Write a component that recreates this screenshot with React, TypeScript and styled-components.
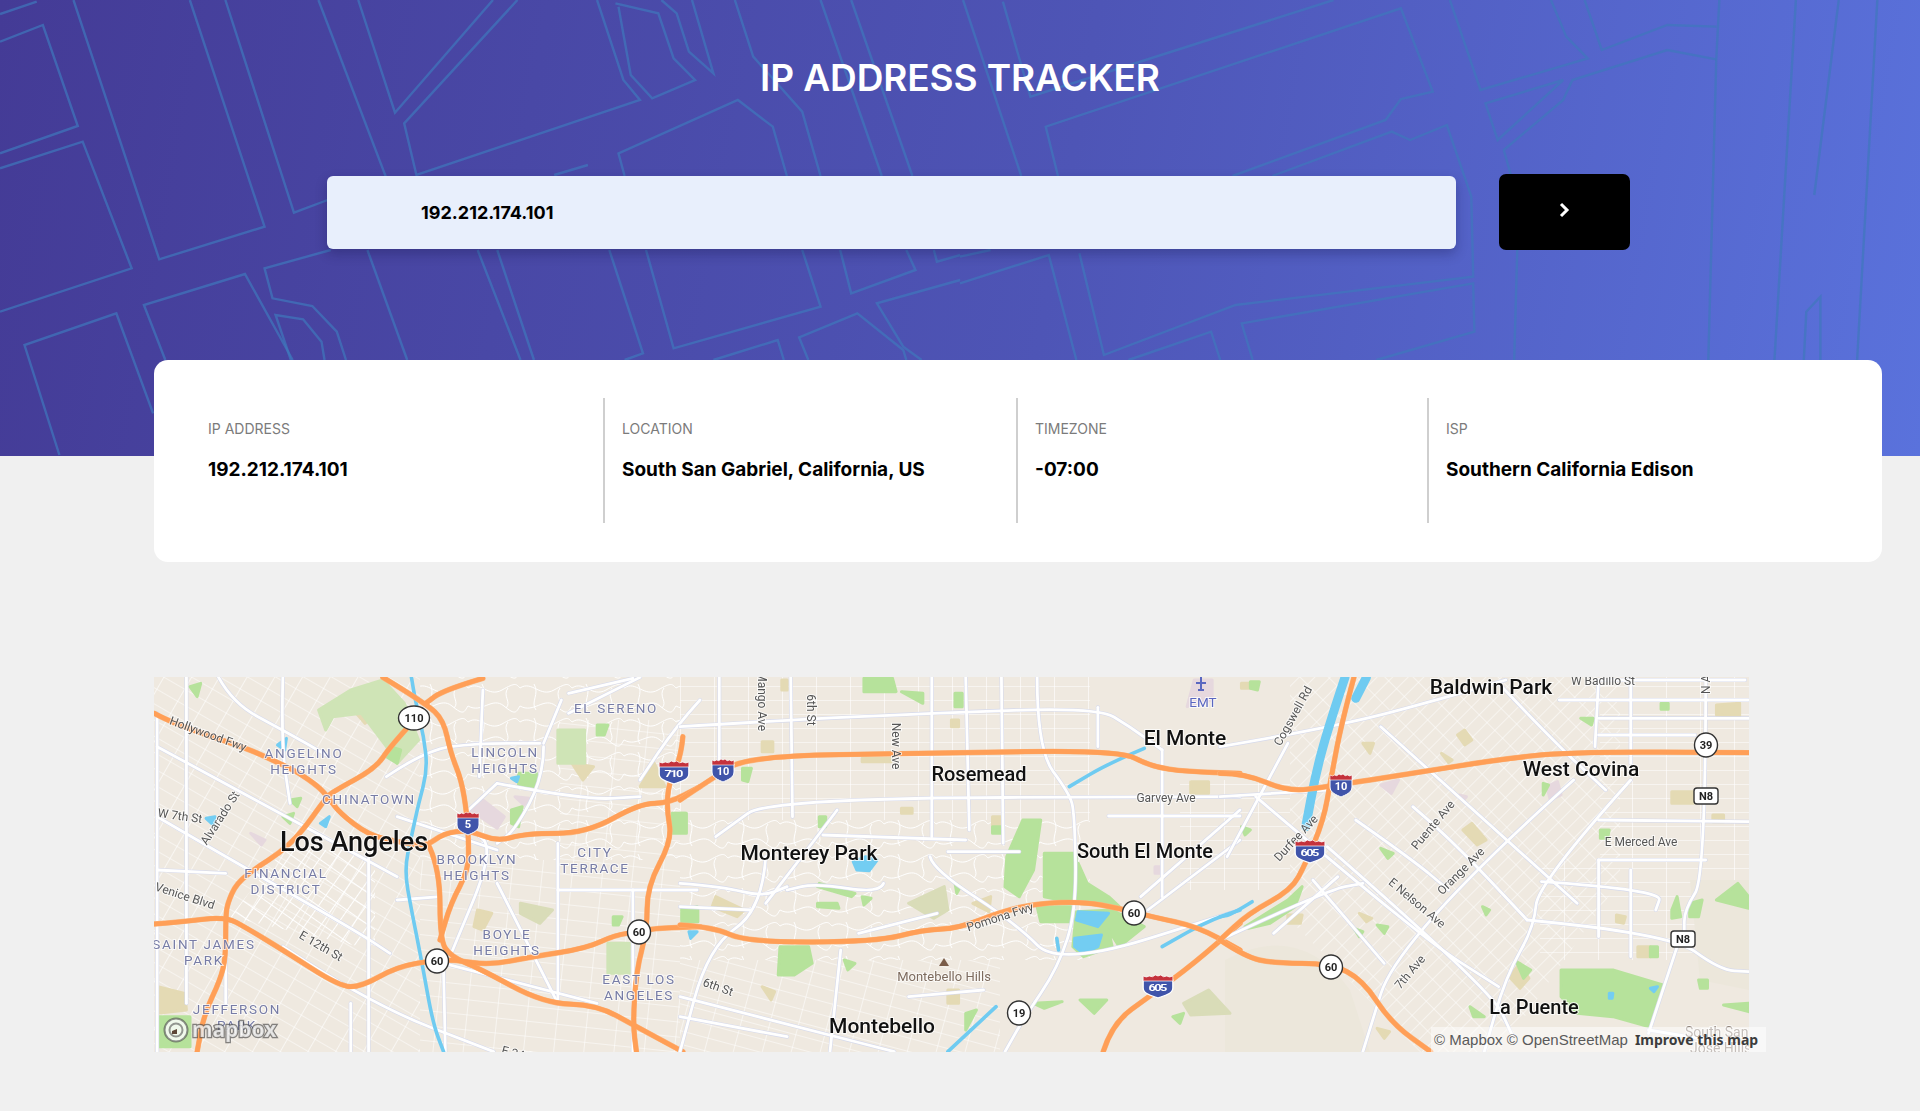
import React from "react";
import styled, { createGlobalStyle } from "styled-components";

const GlobalStyle = createGlobalStyle`
  html, body {
    margin: 0;
    background: #f0f0f0;
    font-family: "Inter", "Liberation Sans", sans-serif;
  }
`;

const Page = styled.main`
  width: 1920px;
  height: 1111px;
  overflow: hidden;
`;

const Hero = styled.header`
  position: relative;
  box-sizing: border-box;
  height: 456px;
  padding-top: 54px;
  background: linear-gradient(100deg, #443b96 0%, #4e55b6 55%, #5a72dc 100%);
  overflow: hidden;
`;

const HeroLines = styled.svg`
  position: absolute;
  inset: 0;
  width: 1920px;
  height: 456px;
  path {
    fill: none;
    stroke: #3f78bc;
    stroke-opacity: 0.7;
    stroke-width: 2.4px;
    vector-effect: non-scaling-stroke;
  }
`;

const Title = styled.h1`
  position: relative;
  margin: 0;
  height: 48px;
  line-height: 48px;
  text-align: center;
  color: #fff;
  font-size: 37px;
  font-weight: 600;
  letter-spacing: -0.1px;
`;

const SearchForm = styled.form`
  position: relative;
  display: flex;
  align-items: center;
  gap: 43px;
  margin: 72px 0 0 327px;
  width: 1303px;
`;

const SearchInput = styled.input`
  box-sizing: border-box;
  flex: 1;
  height: 73px;
  padding: 0 0 0 94px;
  border: 0;
  border-radius: 6px;
  outline: none;
  background: #e8effc;
  box-shadow: 0 5px 12px rgba(20, 20, 70, 0.3);
  color: #000;
  font-family: "Inter", sans-serif;
  font-size: 18px;
  font-weight: 700;
`;

const SearchButton = styled.button`
  display: flex;
  align-items: center;
  justify-content: center;
  width: 131px;
  height: 76px;
  padding: 0 0 5px;
  border: 0;
  border-radius: 7px;
  background: #000;
`;

const InfoCard = styled.section`
  position: relative;
  box-sizing: border-box;
  display: grid;
  grid-template-columns: 414px 413px 411px 1fr;
  width: 1728px;
  height: 202px;
  margin: -96px 0 0 154px;
  padding: 38px 37px 39px;
  border-radius: 14px;
  background: #fff;
`;

const InfoCell = styled.div<{ $divider?: boolean }>`
  padding: 22px 0 0 17px;
  border-right: ${(p) => (p.$divider ? "2px solid #cfcfcf" : "0")};
`;

const InfoLabel = styled.div`
  height: 18px;
  line-height: 18px;
  color: #7b7b7b;
  font-size: 14px;
  font-weight: 400;
`;

const InfoValue = styled.div`
  margin-top: 21px;
  line-height: 22px;
  color: #000;
  font-size: 19px;
  font-weight: 700;
`;

const MapFrame = styled.section`
  position: relative;
  width: 1612px;
  height: 375px;
  margin: 115px 0 0 154px;
`;

const MapCanvas = styled.svg`
  display: block;
  width: 1595px;
  height: 375px;
  background: #efe9e0;
  filter: blur(0.35px);
`;

const Attribution = styled.div`
  position: absolute;
  right: 0;
  bottom: 0;
  display: flex;
  align-items: center;
  gap: 7px;
  box-sizing: border-box;
  height: 25px;
  width: 335px;
  padding-left: 3px;
  background: rgba(255, 255, 255, 0.5);
  color: #5a5a5a;
  font-family: "Liberation Sans", sans-serif;
  font-size: 15px;
  white-space: nowrap;
  b {
    color: #3c3c3c;
    font-family: "Noto Sans", sans-serif;
    font-size: 14px;
    font-weight: 700;
  }
`;

const Road = styled.path<{ $kind: "casing" | "street" | "freeway" | "freewayEdge" | "river" | "canal" }>`
  fill: none;
  stroke-linecap: round;
  stroke-linejoin: round;
  vector-effect: non-scaling-stroke;
  stroke: ${(p) =>
    ({ casing: "#d6daec", street: "#ffffff", freeway: "#ff9f57", freewayEdge: "#fbb57e", river: "#6fcbf1", canal: "#6fcbf1" })[p.$kind]};
  stroke-width: ${(p) =>
    ({ casing: 4, street: 2.8, freeway: 4.6, freewayEdge: 5.4, river: 3.6, canal: 9 })[p.$kind]}px;
`;

const Grid = styled.path<{ $fill: string }>`
  fill: ${(p) => p.$fill};
`;

const Patch = styled.path<{ $fill: string }>`
  fill: ${(p) => p.$fill};
  stroke: ${(p) => p.$fill};
  stroke-width: 3px;
  stroke-linejoin: round;
  vector-effect: non-scaling-stroke;
`;

const Place = styled.text<{ $size?: number }>`
  font-family: "Roboto", sans-serif;
  font-size: ${(p) => p.$size ?? 20}px;
  font-weight: 500;
  fill: #111;
  text-anchor: middle;
  paint-order: stroke;
  stroke: rgba(255, 255, 255, 0.75);
  stroke-width: 2px;
`;

const District = styled.text`
  font-family: "Roboto", sans-serif;
  font-size: 13.5px;
  letter-spacing: 1.7px;
  fill: #777ca6;
  text-anchor: middle;
  paint-order: stroke;
  stroke: rgba(255, 255, 255, 0.7);
  stroke-width: 2px;
`;

const StreetName = styled.text<{ $color?: string; $anchor?: string; $size?: number }>`
  font-family: "Roboto", sans-serif;
  font-size: ${(p) => p.$size ?? 12}px;
  fill: ${(p) => p.$color ?? "#555"};
  text-anchor: ${(p) => p.$anchor ?? "middle"};
  paint-order: stroke;
  stroke: rgba(255, 255, 255, 0.7);
  stroke-width: 2px;
`;

const ShieldText = styled.text<{ $size?: number; $color?: string }>`
  font-family: "Roboto", sans-serif;
  font-size: ${(p) => p.$size ?? 11}px;
  font-weight: 700;
  fill: ${(p) => p.$color ?? "#222"};
  text-anchor: middle;
`;

const MapboxWord = styled.text`
  font-family: "Noto Sans", sans-serif;
  font-size: 21px;
  font-weight: 700;
  fill: rgba(255, 255, 255, 0.75);
  paint-order: stroke;
  stroke: rgba(70, 70, 70, 0.65);
  stroke-width: 2.5px;
`;

// hero line work, traced from the left and right half of the banner
const heroLeft = [
  "M0,42 L60,5",
  "M0,125 L70,75 L127,378 L0,460",
  "M0,505 L135,425 L215,805 L0,935",
  "M120,0 L260,778 L432,680 L310,0",
  "M368,0 L480,638 L535,600",
  "M520,0 L630,530",
  "M585,0 L645,338 L805,0",
  "M845,0 L660,370 L680,525 L1045,300 L1018,240 L975,0",
  "M1005,10 L1075,40 L1100,175 L1135,240 L1065,295 L1030,225 L1010,20",
  "M1080,0 L1105,40 L1125,155 L1165,220 L1130,0",
  "M1020,528 L1010,460 L1205,300 L1262,380 L1285,528",
  "M1200,0 L1230,170 L1310,335 L1340,528",
  "M1340,0 L1440,528",
  "M1390,0 L1490,528",
  "M960,495 L905,525",
  "M540,750 L432,805 L445,895 L510,918 L550,995 L565,1080",
  "M600,750 L665,1080",
  "M780,750 L850,1080",
  "M812,750 L872,1080",
  "M995,750 L1050,1060 L1020,1080",
  "M1055,750 L1100,1045 L1340,920 L1310,750",
  "M1372,750 L1390,880 L1495,810 L1480,750",
  "M270,1080 L235,915 L400,822 L478,1080",
  "M97,1365 L40,1035 L190,940 L250,1240",
  "M475,1080 L450,945 L495,958 L525,1025 L530,1080",
  "M1568,840 L1432,910 L1475,1040 L1505,1080",
  "M1320,1080 L1305,1012 L1400,940 L1475,1050 L1480,1080",
  "M1165,1080 L1270,1020 L1280,1080",
  "M1525,750 L1530,785 L1568,765",
];

const heroRight = [
  "M70,5 L115,290 L610,0",
  "M160,528 L140,380 L720,25 L772,275 L720,297 L695,360 L445,528",
  "M5,0 L100,528",
  "M800,0 L850,270 L1025,175 L990,110 L965,0",
  "M1020,0 L1048,150 L1155,75 L1235,80",
  "M858,310 L985,240 L878,420 Z",
  "M900,528 L888,450 L985,300 L1000,240 L1155,150 L1235,178",
  "M510,528 L705,395 L735,420 L795,375 L835,590 L838,830 L450,915 L235,1065 L195,760",
  "M190,1080 L145,765 L0,850",
  "M478,1080 L460,970 L838,850 L840,995 L680,1080",
  "M275,1080 L410,995 L425,1080",
  "M910,750 L905,1080",
  "M1240,0 L1235,178 L1222,1080",
  "M1365,0 L1330,1080",
  "M1435,0 L1395,585",
  "M1498,0 L1465,1080",
  "M1378,1080 L1382,935 L1405,890 L1405,1080",
  "M0,770 L50,750",
];

// map data in panel coordinates; every panel is a 560x390 crop drawn at 2.8x / 3x
const panels = [
  {
    x: 140,
    hills: [
      "M590,60 L680,30 L740,100 L780,210 L720,280 L690,230 L620,130 L540,140 L520,180 L500,120 Z",
      "M1170,180 L1245,180 L1245,280 L1170,280 Z",
      "M1310,820 L1370,820 L1370,910 L1310,910 Z",
    ],
    parks: [
      "M50,1040 L140,1040 L140,1130 L50,1130 Z",
      "M1060,310 L1110,310 L1110,350 L1060,345 Z",
      "M1490,430 L1530,430 L1530,490 L1490,490 Z",
      "M1518,720 L1560,710 L1560,750 L1518,750 Z",
      "M140,50 L170,40 L160,80 Z",
      "M1280,165 L1310,165 L1300,195 L1280,195 Z",
      "M700,230 L730,240 L720,280 L690,260 Z",
      "M1040,420 L1070,410 L1060,470 L1040,460 Z",
      "M420,390 L450,385 L440,410 Z",
      "M400,440 L430,430 L420,460 Z",
      "M1325,740 L1350,740 L1340,765 L1325,765 Z",
    ],
    sand: [
      "M590,110 L640,70 L670,120 L630,160 Z",
      "M1210,280 L1270,290 L1240,330 Z",
      "M945,720 L985,730 L960,780 L935,770 Z",
      "M50,950 L125,970 L130,1020 L50,1030 Z",
      "M1400,350 L1440,280 L1470,350 Z",
    ],
    fields: ["M1065,700 L1155,720 L1120,760 L1065,730 Z"],
    pink: ["M925,420 L960,390 L1020,440 L1000,475 Z", "M310,490 L350,510 L340,525 Z", "M1050,380 L1090,385 L1075,405 Z"],
    water: [
      "M385,225 L410,205 L405,240 Z",
      "M185,445 L210,440 L205,465 Z",
      "M505,460 L530,440 L520,470 Z",
      "M1040,325 L1060,320 L1055,335 Z",
    ],
    rivers: ["M760,22 L770,90 L795,200 L805,300 L780,400 L760,500 L740,600 L760,720 L790,880 L820,1060 L850,1145"],
    canals: [] as string[],
    streets: [
      "M48,230 L530,510 L720,620",
      "M48,440 L240,560 L600,780 L700,850",
      "M400,22 L395,220 L420,400",
      "M640,560 L640,1145",
      "M48,600 L240,610",
      "M720,690 L840,680",
      "M590,1000 L590,1145",
      "M850,900 L855,1145",
      "M1000,340 L1240,390 L1400,380",
      "M1130,230 L1130,320 L1050,480 L1000,520",
      "M1180,90 L1130,220",
      "M1200,70 L1380,25",
      "M920,420 L1000,340",
      "M960,60 L950,320",
      "M690,320 L800,240 L940,220 L1120,220",
      "M950,500 L1000,520 L860,880",
      "M1170,660 L1560,660",
      "M1380,660 L1380,1145",
      "M1000,640 L1170,1000",
      "M850,880 L1280,1000",
      "M400,830 L640,1000 L990,1145",
      "M220,22 L260,100 L400,180 L530,260",
      "M48,130 L48,1145",
      "M130,22 L130,1000",
      "M240,760 L240,1000",
      "M720,440 L1000,540",
      "M1170,520 L1170,1000",
      "M1400,22 L1200,130",
      "M1568,90 L1500,170 L1400,330",
    ],
    freeways: [
      "M40,130 L90,160 L300,235 L380,275 L440,305 L500,350 L525,380 L560,430 L640,495 L720,515 L800,530 L850,490 L920,480 L1000,515 L1080,490 L1250,490 L1400,400 L1480,400 L1568,350",
      "M960,25 L850,60 L800,100",
      "M680,22 L800,100 L850,150 L870,250 L900,330 L915,430 L920,510 L920,600 L870,700 L840,810",
      "M760,160 L700,230 L660,295 L540,365 L520,385 L450,490 L390,550 L330,590 L270,640 L245,700 L240,740 L240,860 L225,930 L180,1030 L160,1145",
      "M40,762 L120,755 L240,740 L300,775 L400,840 L560,950 L620,950 L720,890 L830,870 L880,870 L980,885 L1100,860 L1250,835 L1330,795 L1400,785 L1440,775 L1568,770",
      "M810,530 L840,600 L840,810 L870,860 L950,895 L1130,1000 L1280,1005 L1390,1070 L1520,1145",
      "M1520,200 L1515,260 L1480,340 L1475,420 L1490,510 L1420,650 L1420,780 L1390,900 L1380,1060 L1390,1145",
    ],
  },
  {
    x: 680,
    hills: [] as string[],
    parks: [
      "M960,450 L1010,450 L990,600 L950,680 L910,650 L915,560 Z",
      "M1020,550 L1110,550 L1110,700 L1020,680 Z",
      "M1115,580 L1140,640 L1200,680 L1230,710 L1110,700 Z",
      "M280,830 L360,830 L370,880 L320,915 L275,915 Z",
      "M1000,710 L1095,710 L1095,755 L1010,755 Z",
      "M1110,725 L1210,720 L1300,770 L1230,830 L1200,780 L1210,830 L1130,860 L1100,830 Z",
      "M515,25 L595,25 L605,65 L515,65 Z",
      "M620,65 L680,70 L680,100 Z",
      "M0,430 L15,430 L15,480 L0,480 Z",
      "M5,715 L50,715 L50,755 L5,755 Z",
      "M390,640 L490,670 L480,680 L385,650 Z",
      "M510,680 L535,685 L515,705 Z",
      "M385,700 L440,700 L445,715 L385,710 Z",
      "M175,295 L200,295 L190,335 L175,330 Z",
      "M990,1000 L1070,995 L1020,1015 Z",
      "M1120,990 L1195,990 L1160,1030 Z",
      "M800,1030 L830,1020 L800,1080 Z",
      "M390,440 L408,440 L408,470 L390,470 Z",
      "M875,470 L900,470 L900,490 L875,490 Z",
      "M770,640 L785,650 L775,670 Z",
      "M770,70 L790,70 L790,110 L770,110 Z",
      "M460,870 L490,880 L470,900 Z",
      "M1380,1040 L1410,1030 L1400,1060 Z",
    ],
    sand: [
      "M620,415 L650,415 L650,430 L620,430 Z",
      "M875,440 L900,440 L900,470 L875,470 Z",
      "M1430,335 L1480,335 L1480,370 L1430,370 Z",
      "M100,680 L180,720 L160,740 L90,710 Z",
      "M820,700 L870,680 L865,725 Z",
      "M750,960 L780,960 L780,1000 L750,1000 Z",
      "M230,950 L265,965 L255,990 Z",
      "M510,265 L590,265 L590,275 L510,275 Z",
      "M230,215 L260,215 L260,245 L230,245 Z",
      "M760,150 L780,150 L780,170 L760,170 Z",
      "M285,30 L300,30 L300,60 L285,60 Z",
    ],
    fields: ["M640,700 L740,650 L750,720 L710,745 Z", "M1410,1000 L1480,960 L1540,1030 L1430,1035 Z"],
    pink: ["M1330,590 L1345,590 L1345,610 L1330,610 Z", "M1440,30 L1490,30 L1490,90 L1420,110 Z"],
    water: [
      "M485,575 L520,560 L552,570 L530,602 L495,600 Z",
      "M1115,725 L1200,730 L1170,770 L1110,750 Z",
      "M1105,805 L1180,795 L1170,830 L1130,850 L1105,830 Z",
      "M25,785 L48,785 L30,805 Z",
    ],
    rivers: ["M1300,235 L1200,280 L1090,350", "M1568,720 L1490,745 L1350,830", "M885,1010 L750,1145", "M1055,805 L1060,840"],
    canals: [] as string[],
    streets: [
      "M0,170 L300,150 L700,130 L1170,112 L1260,170 L1350,240",
      "M310,22 L315,440",
      "M705,22 L705,500",
      "M1000,22 L1000,240 L1090,370 L1105,430 L1110,720 L1060,890 L960,1050 L910,1145",
      "M190,430 L250,385 L1568,380",
      "M400,495 L800,510",
      "M190,430 L100,500",
      "M750,545 L950,545",
      "M0,640 L120,650 L230,680 L300,650",
      "M0,710 L200,720",
      "M700,560 L710,600 L940,760 L1060,890 L1568,720",
      "M240,560 L230,720 L80,830 L0,1145",
      "M0,980 L400,1090 L600,1145",
      "M0,1040 L300,1100",
      "M450,840 L420,1145",
      "M1200,438 L1568,438",
      "M1350,240 L1350,680",
      "M1568,420 L1290,680",
      "M1568,510 L1310,720",
      "M110,22 L110,280",
      "M800,22 L810,480",
      "M900,22 L905,520",
      "M1170,112 L1170,230",
      "M440,420 L370,520 L240,700",
      "M640,980 L850,960",
      "M720,730 L500,790",
      "M570,640 L560,670 L380,640 L300,660",
    ],
    freeways: [
      "M0,390 L90,325 L190,258 L700,250 L1230,240 L1320,290 L1420,305 L1568,310",
      "M0,765 L90,770 L190,817 L550,815 L680,780 L780,775 L900,725 L1000,700 L1130,695 L1230,715 L1320,740 L1450,770 L1568,840",
      "M1185,1145 L1210,1060 L1320,975 L1440,880 L1568,760",
    ],
  },
  {
    x: 1220,
    hills: [] as string[],
    parks: [
      "M955,900 L1100,900 L1240,945 L1200,1070 L1100,1040 L1000,1030 L955,980 Z",
      "M70,770 L190,690 L230,650 L210,710 L140,760 L80,775 Z",
      "M1390,690 L1450,640 L1480,680 L1480,715 Z",
      "M1265,720 L1280,680 L1290,740 L1265,745 Z",
      "M1315,700 L1350,690 L1340,740 L1315,740 Z",
      "M1410,1005 L1480,1000 L1480,1025 Z",
      "M450,535 L485,550 L470,565 Z",
      "M440,765 L470,770 L460,790 Z",
      "M735,710 L755,720 L745,735 Z",
      "M60,470 L85,480 L70,495 Z",
      "M1065,480 L1090,480 L1085,505 L1065,505 Z",
      "M1010,145 L1045,145 L1040,165 Z",
      "M1235,100 L1255,100 L1255,118 L1235,118 Z",
      "M830,875 L870,900 L850,925 Z",
      "M1340,930 L1365,930 L1365,955 L1345,955 Z",
      "M1205,830 L1225,830 L1225,860 L1205,860 Z",
      "M905,340 L920,345 L905,375 Z",
      "M700,1010 L740,1040 L710,1040 Z",
      "M375,775 L400,785 L390,800 Z",
      "M85,35 L110,35 L105,60 L85,55 Z",
    ],
    sand: [
      "M665,195 L685,180 L705,210 L685,225 Z",
      "M680,480 L705,460 L745,510 L720,525 Z",
      "M1265,365 L1325,365 L1325,400 L1265,400 Z",
      "M1380,435 L1410,435 L1410,455 L1380,455 Z",
      "M1390,105 L1455,100 L1455,140 L1390,135 Z",
      "M1170,830 L1205,830 L1205,860 L1170,860 Z",
      "M810,920 L840,880 L865,925 L840,955 Z",
      "M400,220 L430,220 L420,250 Z",
      "M190,735 L230,735 L225,760 L190,760 Z",
      "M390,730 L425,745 L410,755 Z",
      "M1110,735 L1135,740 L1130,760 L1110,755 Z",
      "M440,1075 L475,1085 L460,1105 Z",
      "M60,40 L85,40 L85,55 L60,55 Z",
      "M620,250 L650,270 L640,278 Z",
    ],
    fields: [] as string[],
    pink: ["M450,345 L500,330 L480,370 Z", "M915,350 L945,335 L955,375 L925,390 Z", "M670,375 L690,380 L680,392 Z"],
    water: ["M1090,970 L1100,970 L1098,985 L1090,985 Z", "M1205,955 L1225,950 L1215,965 Z"],
    rivers: ["M90,695 L30,735 L0,740"],
    canals: ["M350,22 L310,150 L270,300 L240,470", "M410,22 L380,85"],
    streets: [
      "M0,230 L330,170 L640,80 L800,30",
      "M0,380 L300,360",
      "M100,380 L560,800 L780,950",
      "M300,530 L760,960 L820,1100",
      "M1150,330 L890,640 L880,770 L800,920 L740,1145",
      "M990,330 L500,800 L400,1145",
      "M1470,30 L1060,30",
      "M1060,30 L1050,230",
      "M1360,22 L1360,620 L1300,720 L1300,790",
      "M860,750 L1260,790 L1400,900 L1480,905",
      "M1280,830 L1200,1090",
      "M900,635 L1240,660 L1220,720",
      "M1060,450 L1480,455",
      "M540,410 L640,500 L860,750",
      "M450,170 L1000,700",
      "M780,40 L930,210 L1080,360",
      "M950,90 L1480,90",
      "M1060,145 L1480,145",
      "M1060,195 L1330,195",
      "M1150,30 L1150,280",
      "M1060,570 L1360,570",
      "M380,450 L540,570 L640,660",
      "M1060,570 L1060,800",
      "M1150,600 L1150,860",
      "M1200,1080 L1480,1130",
      "M0,810 L300,660 L400,640",
      "M330,620 L150,790",
      "M260,630 L460,880",
      "M190,220 L20,560",
    ],
    freeways: [
      "M375,22 L340,160 L310,330 L290,450 L240,580 L200,660 L80,730 L0,810",
      "M0,310 L70,310 L190,365 L300,350 L540,310 L770,270 L980,245 L1481,248",
      "M0,810 L70,860 L150,880 L310,880 L400,930 L480,1060 L590,1145",
    ],
  },
];

const panelTransform = (x: number) => `translate(${x} 670) scale(${1 / 2.8} ${1 / 3})`;

// round the corners of a traced polyline
const smooth = (d: string) => {
  const pts = d
    .replace(/[ML]/g, "")
    .trim()
    .split(/\s+/)
    .map((p) => p.split(",").map(Number));
  if (pts.length < 3) return d;
  let out = `M${pts[0][0]},${pts[0][1]}`;
  for (let i = 1; i < pts.length - 1; i++) {
    const [x, y] = pts[i];
    const [nx, ny] = pts[i + 1];
    out += ` Q${x},${y} ${(x + nx) / 2},${(y + ny) / 2}`;
  }
  const last = pts[pts.length - 1];
  return `${out} L${last[0]},${last[1]}`;
};

const InterstateShield = ({ x, y, label, wide }: { x: number; y: number; label: string; wide?: boolean }) => (
  <g transform={`translate(${x} ${y}) scale(${wide ? 1.35 : 1} 1)`}>
    <path d="M-11,-6 H11 V2 C11,8 4,10 0,12 C-4,10 -11,8 -11,2 Z" fill="#4054aa" stroke="#fff" strokeWidth="1" />
    <path
      d="M-11,-5 V-10 Q-8.5,-8 -6.5,-10 Q-4,-8 -2,-11 Q0,-9 2,-11 Q4,-8 6.5,-10 Q8.5,-8 11,-10 V-5 Z"
      fill="#c4323c"
      stroke="#fff"
      strokeWidth="0.6"
    />
    <ShieldText $color="#fff" $size={label.length > 2 ? 9.5 : 11} y="5" textLength={label.length > 2 ? 14 : undefined}>
      {label}
    </ShieldText>
  </g>
);

const RoundShield = ({ x, y, label, rx = 11.5 }: { x: number; y: number; label: string; rx?: number }) => (
  <g transform={`translate(${x} ${y})`}>
    <ellipse rx={rx} ry="12" fill="#fff" stroke="#333" strokeWidth="1.4" />
    <ShieldText y="4">{label}</ShieldText>
  </g>
);

const SquareShield = ({ x, y, label }: { x: number; y: number; label: string }) => (
  <g transform={`translate(${x} ${y})`}>
    <rect x="-12" y="-8" width="24" height="16" rx="3" fill="#fff" stroke="#333" strokeWidth="1.4" />
    <ShieldText y="4">{label}</ShieldText>
  </g>
);

const streetNames: [string, number, number, number][] = [
  ["Hollywood Fwy", 208, 738, 20],
  ["W 7th St", 180, 820, 8],
  ["Alvarado St", 220, 822, -57],
  ["Venice Blvd", 185, 900, 18],
  ["E 12th St", 321, 950, 30],
  ["E 24th St", 525, 1060, 15],
  ["New Ave", 896, 750, 90],
  ["6th St", 811, 714, 90],
  ["Garvey Ave", 1166, 802, 0],
  ["Pomona Fwy", 1000, 921, -18],
  ["6th St", 718, 991, 20],
  ["Cogswell Rd", 1293, 720, -61],
  ["W Badillo St", 1603, 685, 0],
  ["E Merced Ave", 1641, 846, 0],
  ["Puente Ave", 1433, 829, -50],
  ["Orange Ave", 1461, 875, -45],
  ["Durfee Ave", 1296, 842, -47],
  ["E Nelson Ave", 1417, 907, 40],
  ["7th Ave", 1410, 976, -50],
];

const districts: [string, number, number][] = [
  ["ANGELINO", 304, 758],
  ["HEIGHTS", 304, 774],
  ["LINCOLN", 505, 757],
  ["HEIGHTS", 505, 773],
  ["EL SERENO", 616, 713],
  ["CHINATOWN", 369, 804],
  ["FINANCIAL", 286, 878],
  ["DISTRICT", 286, 894],
  ["BROOKLYN", 477, 864],
  ["HEIGHTS", 477, 880],
  ["CITY", 595, 857],
  ["TERRACE", 595, 873],
  ["BOYLE", 507, 939],
  ["HEIGHTS", 507, 955],
  ["SAINT JAMES", 204, 949],
  ["PARK", 204, 965],
  ["EAST LOS", 639, 984],
  ["ANGELES", 639, 1000],
  ["JEFFERSON", 237, 1014],
  ["PARK", 237, 1030],
];

const places: [string, number, number, number][] = [
  ["Los Angeles", 354, 851, 27],
  ["Monterey Park", 809, 860, 21],
  ["Rosemead", 979, 781, 20],
  ["El Monte", 1185, 745, 21],
  ["South El Monte", 1145, 858, 20],
  ["Montebello", 882, 1033, 21],
  ["Baldwin Park", 1491, 694, 21],
  ["West Covina", 1581, 776, 21],
  ["La Puente", 1534, 1014, 20],
];

const StreetMap = () => (
  <MapCanvas viewBox="154 677 1595 375">
    <defs>
      <pattern id="gridWest" width="24" height="14" patternUnits="userSpaceOnUse" patternTransform="rotate(30)">
        <path d="M0,0 H24 M0,0 V14" stroke="#fff" strokeWidth="1.2" fill="none" />
      </pattern>
      <pattern id="gridDowntown" width="13" height="13" patternUnits="userSpaceOnUse" patternTransform="rotate(35)">
        <path d="M0,0 H13 M0,0 V13" stroke="#fff" strokeWidth="2" fill="none" />
      </pattern>
      <pattern id="gridEast" width="30" height="15" patternUnits="userSpaceOnUse" patternTransform="rotate(6)">
        <path d="M0,0 H30 M0,0 V15" stroke="#fff" strokeWidth="1.1" fill="none" />
      </pattern>
      <pattern id="gridFlat" width="34" height="14" patternUnits="userSpaceOnUse">
        <path d="M0,0 H34 M0,0 V14" stroke="#fff" strokeWidth="1.2" fill="none" />
      </pattern>
      <pattern id="gridSouth" width="28" height="13" patternUnits="userSpaceOnUse" patternTransform="rotate(15)">
        <path d="M0,0 H28 M0,0 V13" stroke="#fff" strokeWidth="1.1" fill="none" />
      </pattern>
      <pattern id="gridDiag" width="20" height="11" patternUnits="userSpaceOnUse" patternTransform="rotate(-45)">
        <path d="M0,0 H20 M0,0 V11" stroke="#fff" strokeWidth="1" fill="none" />
      </pattern>
      <pattern id="gridHill" width="52" height="34" patternUnits="userSpaceOnUse">
        <path d="M0,8 C12,0 20,18 34,10 S48,4 52,8 M0,26 C14,34 24,16 36,26 S48,32 52,26 M14,4 C20,14 10,22 16,30 M40,8 C34,16 44,22 38,28" stroke="#fff" strokeWidth="1" fill="none" />
      </pattern>
    </defs>

    <Grid $fill="url(#gridWest)" d="M154,677 H420 V1052 H154 Z" />
    <Grid $fill="url(#gridHill)" d="M420,677 H680 V860 H420 Z M680,820 H1090 V960 H680 Z" />
    <Grid $fill="url(#gridEast)" d="M420,860 H680 V1052 H420 Z M560,720 H680 V860 H560 Z" />
    <Grid $fill="url(#gridFlat)" d="M680,677 H1090 V820 H680 Z M1180,780 H1290 V890 H1180 Z" />
    <Grid $fill="url(#gridSouth)" d="M680,960 H1000 V1052 H680 Z" />
    <Grid $fill="url(#gridDiag)" d="M1290,677 H1620 V880 L1500,1052 H1420 L1290,920 Z" />
    <Grid $fill="url(#gridFlat)" d="M1600,677 H1749 V880 H1600 Z M1540,860 H1700 V960 H1540 Z" />
    <Grid $fill="url(#gridDowntown)" d="M283,850 H375 V950 L230,917 Z" />
    <Grid $fill="#ece7db" d="M1225,960 Q1300,920 1350,990 L1370,1052 H1225 Z M1690,880 L1749,880 V990 L1700,980 Z" />

    {panels.map((panel) => (
      <g key={panel.x} transform={panelTransform(panel.x)}>
        {panel.fields.map((d) => (
          <Patch key={d} $fill="#d9dcb8" d={d} />
        ))}
        {panel.sand.map((d) => (
          <Patch key={d} $fill="#e4dab4" d={d} />
        ))}
        {panel.pink.map((d) => (
          <Patch key={d} $fill="#e6d8de" d={d} />
        ))}
        {panel.hills.map((d) => (
          <Patch key={d} $fill="#cfe4b6" d={d} />
        ))}
        {panel.parks.map((d) => (
          <Patch key={d} $fill="#b6e29b" d={d} />
        ))}
        {panel.water.map((d) => (
          <Patch key={d} $fill="#73cdf2" d={d} />
        ))}
        {panel.streets.map((d) => (
          <Road key={d} $kind="casing" d={smooth(d)} />
        ))}
        {panel.streets.map((d) => (
          <Road key={d} $kind="street" d={smooth(d)} />
        ))}
        {panel.rivers.map((d) => (
          <Road key={d} $kind="river" d={smooth(d)} />
        ))}
        {panel.canals.map((d) => (
          <Road key={d} $kind="canal" d={smooth(d)} />
        ))}
        {panel.freeways.map((d) => (
          <Road key={d} $kind="freewayEdge" d={smooth(d)} />
        ))}
        {panel.freeways.map((d) => (
          <Road key={d} $kind="freeway" d={smooth(d)} />
        ))}
      </g>
    ))}

    {streetNames.map(([name, x, y, angle]) => (
      <StreetName key={name + x} x={x} y={y} transform={`rotate(${angle} ${x} ${y - 4})`}>
        {name}
      </StreetName>
    ))}
    <StreetName x={762} y={727} $anchor="end" transform="rotate(90 758 727)">
      Mango Ave
    </StreetName>
    <StreetName x={1710} y={694} $anchor="start" transform="rotate(-90 1710 694)">
      N Azusa Ave
    </StreetName>
    <StreetName x={944} y={981} $color="#7d6b5e" $size={13}>
      Montebello Hills
    </StreetName>
    <StreetName x={1685} y={1037} $anchor="start" $color="#8a7d74" $size={14}>
      South San
    </StreetName>
    <StreetName x={1690} y={1053} $anchor="start" $color="#8a7d74" $size={14}>
      Jose Hills
    </StreetName>
    <StreetName x={1203} y={707} $color="#5a67c0" $size={13.5}>
      EMT
    </StreetName>
    <path d="M1201,677 V690 M1196,683 H1206 M1198,690 H1204" stroke="#5a67c0" strokeWidth="2" fill="none" />
    <path d="M944,958 L949,966 H939 Z" fill="#7a5c48" />

    {districts.map(([name, x, y]) => (
      <District key={name + x + y} x={x} y={y}>
        {name}
      </District>
    ))}
    {places.map(([name, x, y, size]) => (
      <Place key={name} x={x} y={y} $size={size}>
        {name}
      </Place>
    ))}

    <InterstateShield x={674} y={772} label="710" wide />
    <InterstateShield x={468} y={823} label="5" />
    <InterstateShield x={723} y={770} label="10" />
    <InterstateShield x={1341} y={785} label="10" />
    <InterstateShield x={1158} y={986} label="605" wide />
    <InterstateShield x={1310} y={851} label="605" wide />
    <RoundShield x={414} y={718} label="110" rx={15.5} />
    <RoundShield x={437} y={961} label="60" />
    <RoundShield x={639} y={932} label="60" />
    <RoundShield x={1134} y={913} label="60" />
    <RoundShield x={1331} y={967} label="60" />
    <RoundShield x={1019} y={1013} label="19" />
    <RoundShield x={1706} y={745} label="39" />
    <SquareShield x={1706} y={796} label="N8" />
    <SquareShield x={1683} y={939} label="N8" />

    <g transform="translate(176 1030)">
      <circle r="11.5" fill="rgba(255,255,255,0.8)" stroke="rgba(70,70,70,0.6)" strokeWidth="2" />
      <circle r="6.5" fill="none" stroke="rgba(70,70,70,0.55)" strokeWidth="2" />
      <path d="M-4,1 L1,-1 L1,4 L-4,4 Z" fill="#5c4636" />
    </g>
    <MapboxWord x={192} y={1037}>
      mapbox
    </MapboxWord>
  </MapCanvas>
);

const App = () => (
  <Page>
    <GlobalStyle />
    <Hero>
      <HeroLines viewBox="0 0 1920 456" aria-hidden="true">
        <g transform={`scale(${1 / 1.633} ${1 / 3})`}>
          {heroLeft.map((d) => (
            <path key={d} d={d} />
          ))}
        </g>
        <g transform={`translate(960 0) scale(${1 / 1.633} ${1 / 3})`}>
          {heroRight.map((d) => (
            <path key={d} d={d} />
          ))}
        </g>
      </HeroLines>
      <Title>IP ADDRESS TRACKER</Title>
      <SearchForm onSubmit={(e) => e.preventDefault()}>
        <SearchInput defaultValue="192.212.174.101" />
        <SearchButton type="submit" aria-label="Search">
          <svg width="11" height="16" viewBox="0 0 11 16">
            <path d="M2,2 L8,8 L2,14" fill="none" stroke="#fff" strokeWidth="3" />
          </svg>
        </SearchButton>
      </SearchForm>
    </Hero>
    <InfoCard>
      <InfoCell $divider>
        <InfoLabel>IP ADDRESS</InfoLabel>
        <InfoValue>192.212.174.101</InfoValue>
      </InfoCell>
      <InfoCell $divider>
        <InfoLabel>LOCATION</InfoLabel>
        <InfoValue>South San Gabriel, California, US</InfoValue>
      </InfoCell>
      <InfoCell $divider>
        <InfoLabel>TIMEZONE</InfoLabel>
        <InfoValue>-07:00</InfoValue>
      </InfoCell>
      <InfoCell>
        <InfoLabel>ISP</InfoLabel>
        <InfoValue>Southern California Edison</InfoValue>
      </InfoCell>
    </InfoCard>
    <MapFrame>
      <StreetMap />
      <Attribution>
        <span>© Mapbox © OpenStreetMap</span>
        <b>Improve this map</b>
      </Attribution>
    </MapFrame>
  </Page>
);

export default App;
